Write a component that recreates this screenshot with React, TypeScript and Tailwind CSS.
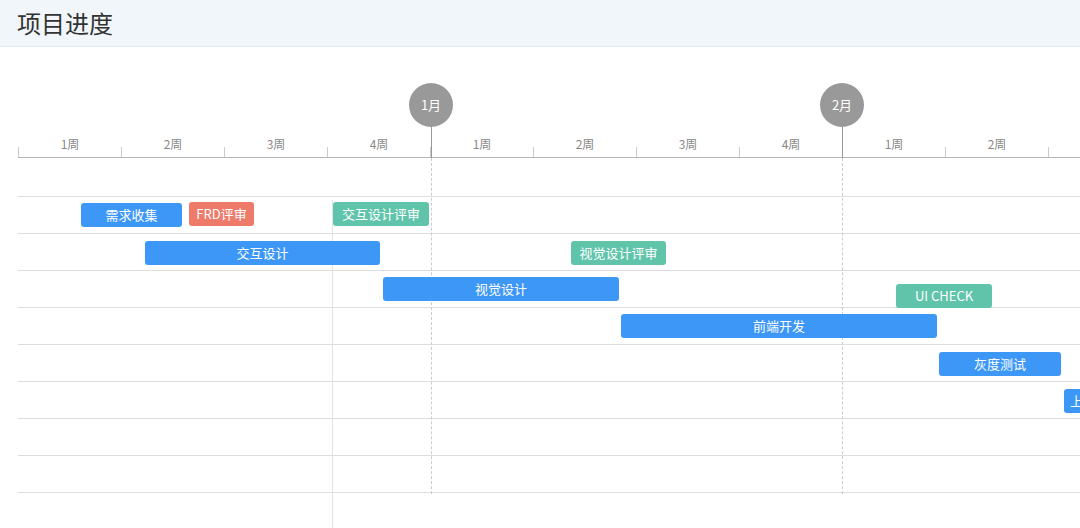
import React from "react";

const blue = "bg-[#3d97f6]";
const green = "bg-[#5fc4aa]";
const bars = [
  { t: "需求收集", x: 81, w: 101, y: 203, c: blue },
  { t: "FRD评审", x: 189, w: 65, y: 202, c: "bg-[#ee7a69]" },
  { t: "交互设计评审", x: 333, w: 96, y: 202, c: green },
  { t: "交互设计", x: 145, w: 235, y: 241, c: blue },
  { t: "视觉设计评审", x: 571, w: 95, y: 241, c: green },
  { t: "视觉设计", x: 383, w: 236, y: 277, c: blue },
  { t: "UI CHECK", x: 896, w: 96, y: 284, c: green },
  { t: "前端开发", x: 621, w: 316, y: 314, c: blue },
  { t: "灰度测试", x: 939, w: 122, y: 352, c: blue },
];
const weeks = ["1周", "2周", "3周", "4周", "1周", "2周", "3周", "4周", "1周", "2周", ""];

export default function App() {
  return (
    <div className="w-[1080px] h-[528px] overflow-hidden bg-white flex flex-col" style={{ fontFamily: "'Noto Sans CJK SC', 'Liberation Sans', sans-serif" }}>
      <div className="h-[47px] shrink-0 bg-[#f1f6fa] border-b border-[#e3e8ee] flex items-center pl-[17px]">
        <span className="text-[24px] text-[#333]">项目进度</span>
      </div>
      <div className="relative flex-1 pl-[18px]">
        {/* month markers area */}
        <div className="h-[90px]" />
        {/* week axis */}
        <div className="flex h-[21px] border-b border-[#b5b5b5]">
          {weeks.map((w, i) => (
            <div key={i} className="w-[103px] shrink-0 border-l border-[#ccc] h-[10px] self-end relative">
              <span className="absolute -top-[12px] left-0 right-0 text-center text-[12px] text-[#888]">{w}</span>
            </div>
          ))}
        </div>
        {/* rows */}
        <div className="flex flex-col pt-[38px] border-b-0">
          {Array.from({ length: 8 }).map((_, i) => (
            <div key={i} className="h-[37px] border-t border-[#ddd]" />
          ))}
          <div className="border-t border-[#ddd]" />
        </div>
        {/* month circles + dashed lines */}
        {[431, 842].map((x, i) => (
          <React.Fragment key={x}>
            <div className="absolute top-[36px] w-[44px] h-[44px] rounded-full bg-[#999] text-white text-[13px] flex items-center justify-center" style={{ left: x - 22 }}>{i + 1}月</div>
            <div className="absolute top-[80px] h-[31px] w-px bg-[#999]" style={{ left: x }} />
            <div className="absolute top-[111px] h-[336px] border-l border-dashed border-[#ccc]" style={{ left: x }} />
          </React.Fragment>
        ))}
        <div className="absolute left-[332px] top-[153px] bottom-0 w-px bg-[#e2e2e2]" />
        {bars.map((b) => (
          <div key={b.t} className={`absolute h-[24px] rounded-[3px] text-white text-[13px] flex items-center justify-center whitespace-nowrap ${b.c}`} style={{ left: b.x, width: b.w, top: b.y - 47 }}>{b.t}</div>
        ))}
        <div className={`absolute left-[1064px] top-[342px] w-[80px] h-[24px] rounded-[3px] text-white text-[13px] flex items-center pl-[6px] ${blue}`}>上线</div>
      </div>
    </div>
  );
}
